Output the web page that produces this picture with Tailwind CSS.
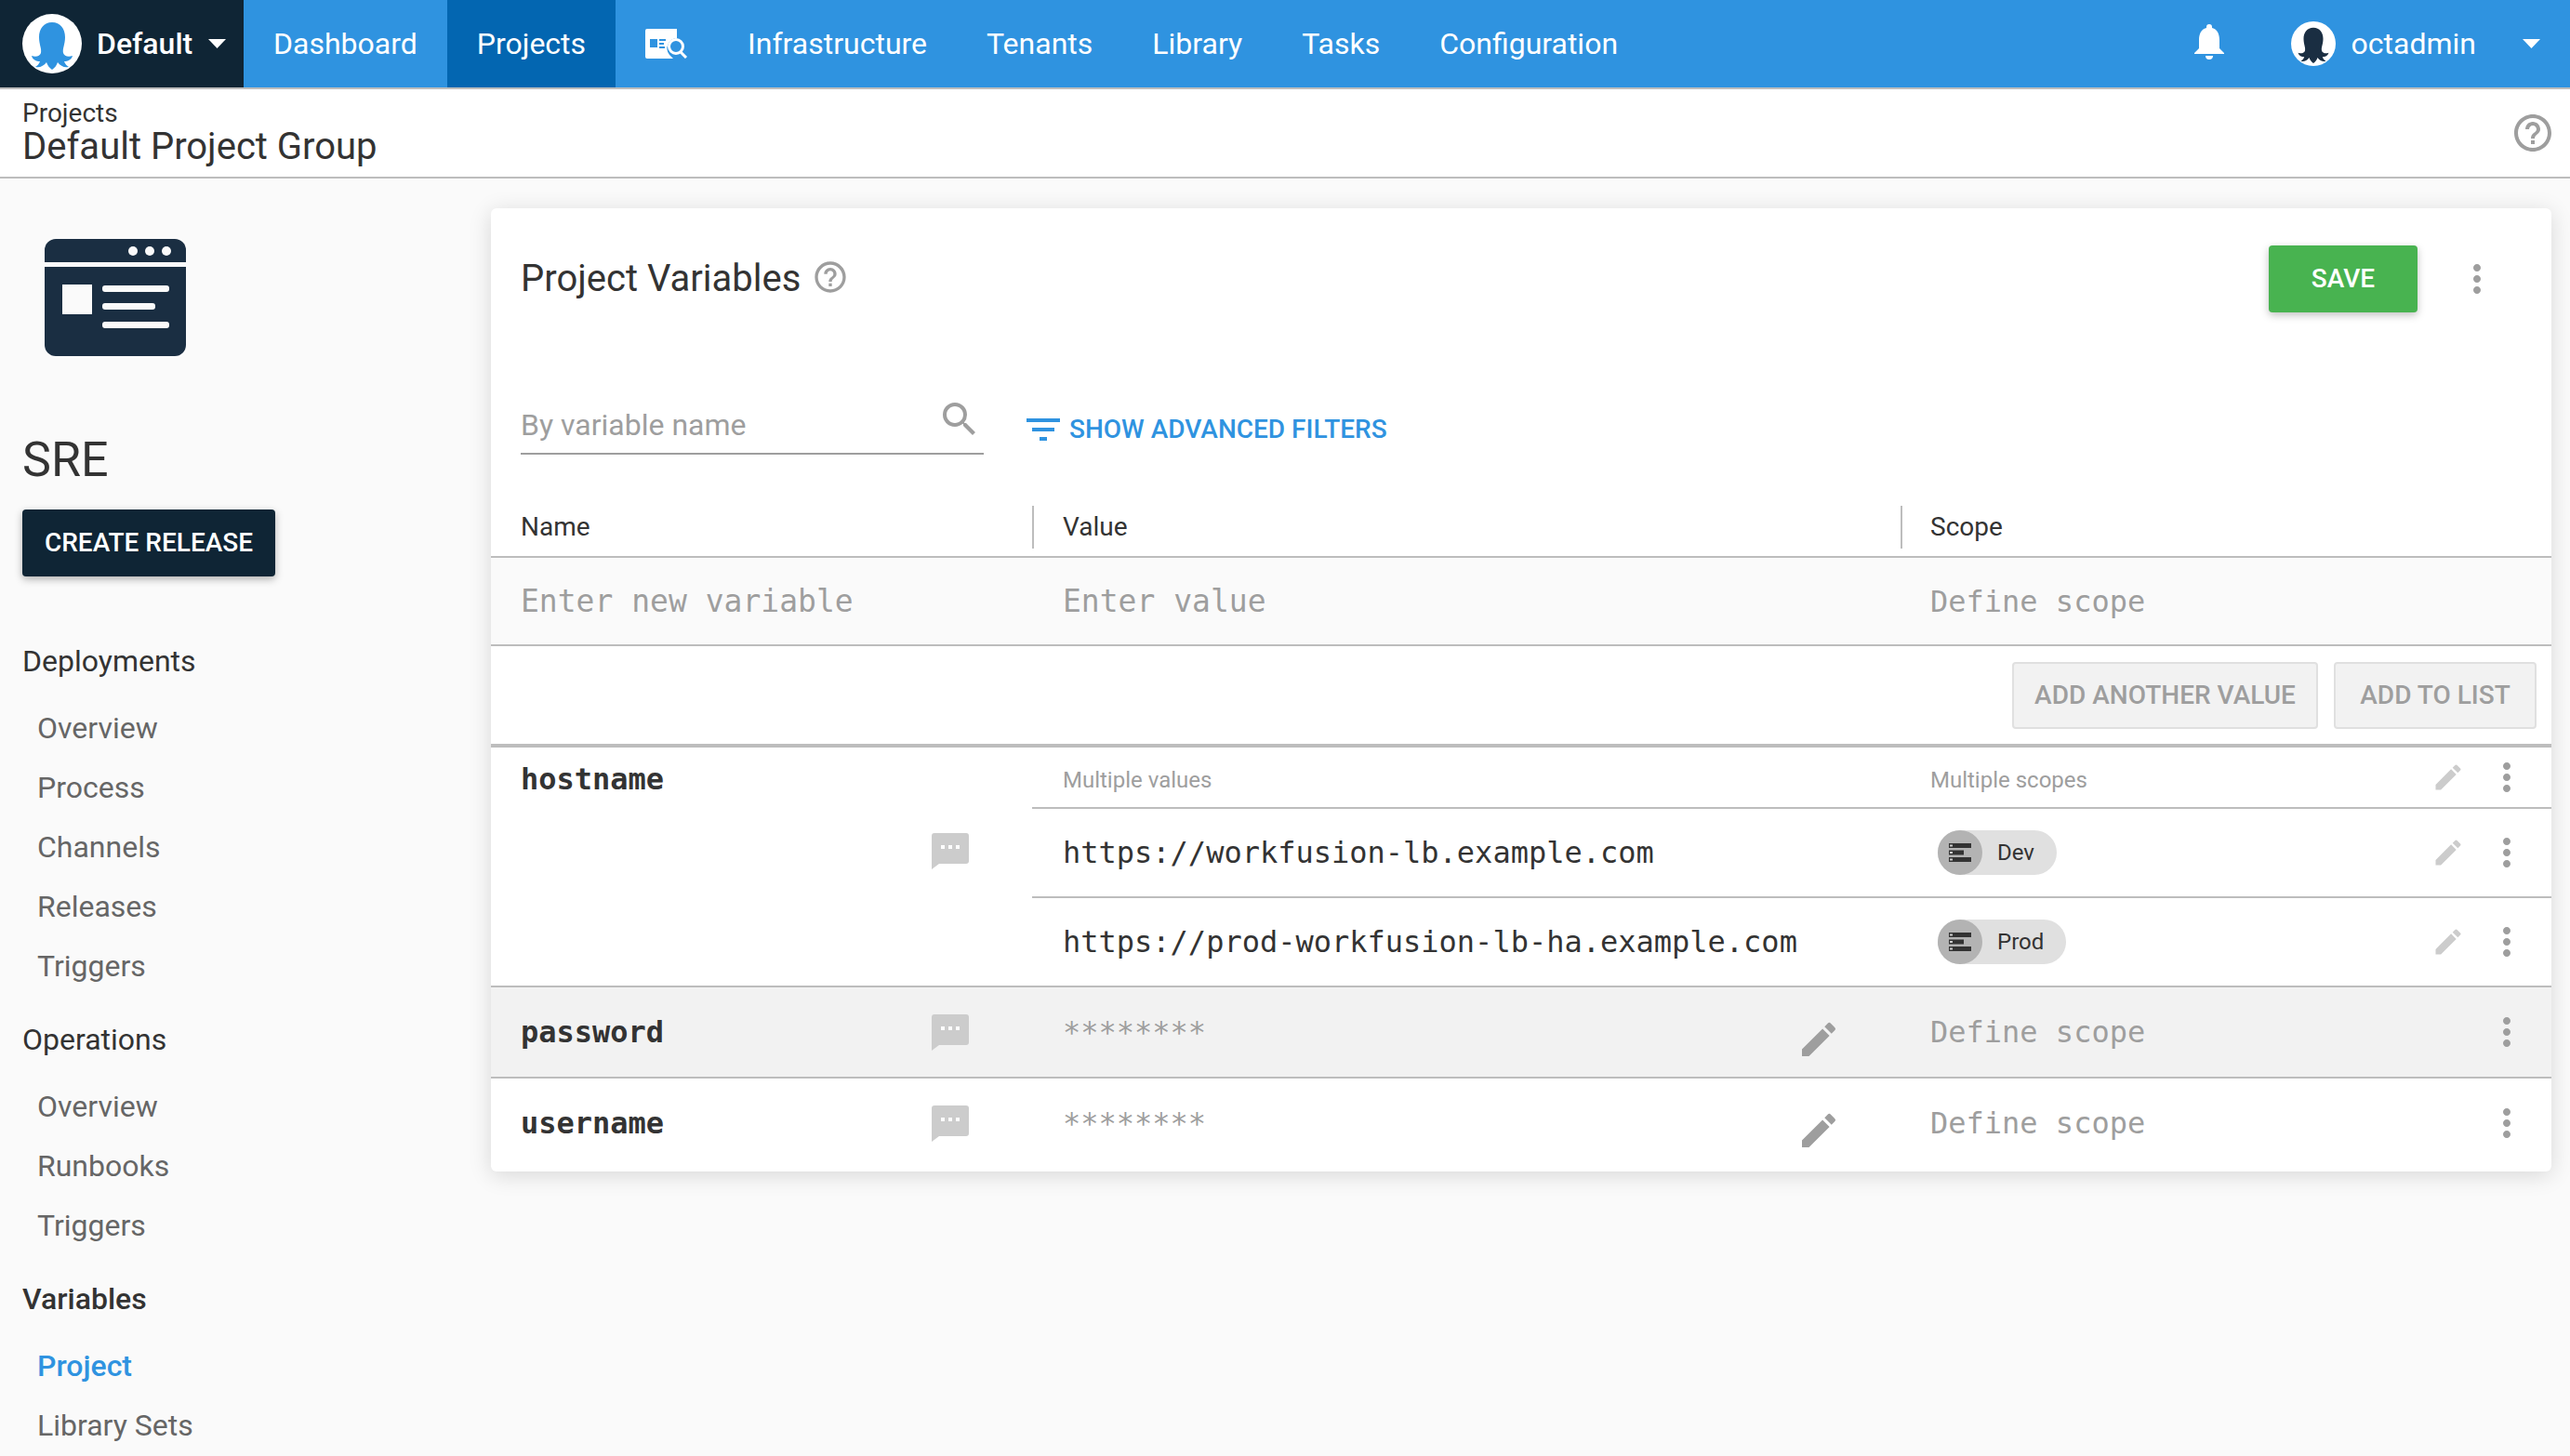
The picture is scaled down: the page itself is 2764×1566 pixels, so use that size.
<!DOCTYPE html>
<html lang="en">
<head>
  <meta charset="UTF-8" />
  <title>Project Variables</title>
  <script src="https://cdn.jsdelivr.net/npm/@tailwindcss/browser@4"></script>
</head>
<body class="bg-[#fafafa] font-['Roboto',sans-serif] text-[#333] h-[1566px] overflow-hidden">

  <!-- top nav -->
  <nav class="flex h-[96px] bg-[#2f93e0] border-b-2 border-[#bdbdbd] text-white text-[32px]">
    <div class="flex items-center w-[262px] bg-[#0f2535] pl-[24px]">
      <svg class="w-[64px] h-[64px]" viewBox="0 0 64 64"><circle cx="32" cy="32" r="32" fill="#fff"/><path fill="#2f93e0" d="M32 9C23 9 18 16 18 25C18 33 21 37 20 42C19 45 15 47 10 45C11 49 15 51 19 51C18 54 16 56 14 57C19 58 23 56 26 52C27 55 29 58 32 60C35 58 37 55 38 52C41 56 45 58 50 57C48 56 46 54 45 51C49 51 53 49 54 45C49 47 45 45 44 42C43 37 46 33 46 25C46 16 41 9 32 9Z"/></svg>
      <span class="ml-[16px] font-medium">Default</span>
      <svg class="ml-[17px] w-[19px] h-[10px]" viewBox="0 0 19 10"><path fill="#fff" d="M0 0h19L9.500 10z"/></svg>
    </div>
    <a class="flex items-center px-[32px]">Dashboard</a>
    <a class="flex items-center px-[32px] bg-[#0366b1]">Projects</a>
    <a class="flex items-center px-[32px]">
      <svg class="w-[46px] h-[32px]" viewBox="0 0 46 32"><path fill="#fff" d="M2 0h32v10a11 11 0 0 0-8 18l4 4H2a2 2 0 0 1-2-2V2a2 2 0 0 1 2-2z"/><rect x="5" y="11" width="8" height="9" fill="#2f93e0"/><rect x="15" y="11" width="7" height="2" fill="#2f93e0"/><rect x="15" y="15" width="5" height="2" fill="#2f93e0"/><rect x="15" y="19" width="6" height="2" fill="#2f93e0"/><circle cx="33" cy="19" r="7.500" fill="none" stroke="#fff" stroke-width="3"/><path d="M38 25l6 6" stroke="#fff" stroke-width="3"/></svg>
    </a>
    <a class="flex items-center px-[32px]">Infrastructure</a>
    <a class="flex items-center px-[32px]">Tenants</a>
    <a class="flex items-center px-[32px]">Library</a>
    <a class="flex items-center px-[32px]">Tasks</a>
    <a class="flex items-center px-[32px]">Configuration</a>
    <div class="ml-auto flex items-center pr-[32px]">
      <svg class="w-[32px] h-[39px] mb-[4px]" viewBox="0 0 32 39"><path fill="#fff" d="M16 0a3 3 0 0 1 3 3v1c6 1.500 8 7 8 13v9l5 5v1H0v-1l5-5v-9C5 11 7 5.500 13 4V3a3 3 0 0 1 3-3zM12 34h8a4 4 0 0 1-8 0z"/></svg>
      <svg class="ml-[72px] w-[48px] h-[48px]" viewBox="0 0 64 64"><circle cx="32" cy="32" r="32" fill="#fff"/><path fill="#1a2e42" d="M32 9C23 9 18 16 18 25C18 33 21 37 20 42C19 45 15 47 10 45C11 49 15 51 19 51C18 54 16 56 14 57C19 58 23 56 26 52C27 55 29 58 32 60C35 58 37 55 38 52C41 56 45 58 50 57C48 56 46 54 45 51C49 51 53 49 54 45C49 47 45 45 44 42C43 37 46 33 46 25C46 16 41 9 32 9Z"/></svg>
      <span class="ml-[17px]">octadmin</span>
      <svg class="ml-[50px] w-[19px] h-[10px]" viewBox="0 0 19 10"><path fill="#fff" d="M0 0h19L9.500 10z"/></svg>
    </div>
  </nav>

  <!-- breadcrumb header -->
  <header class="flex items-center justify-between h-[96px] bg-white border-b-2 border-[#bdbdbd] pl-[24px] pr-[16px]">
    <div class="-mt-[2px]">
      <div class="text-[28px] leading-[32px]">Projects</div>
      <div class="text-[40px] leading-[40px]">Default Project Group</div>
    </div>
    <svg class="w-[48px] h-[48px]" viewBox="0 0 24 24"><path fill="#9e9e9e" d="M11 18h2v-2h-2v2zm1-16C6.480 2 2 6.480 2 12s4.480 10 10 10 10-4.480 10-10S17.520 2 12 2zm0 18c-4.410 0-8-3.590-8-8s3.590-8 8-8 8 3.590 8 8-3.590 8-8 8zm0-14c-2.210 0-4 1.790-4 4h2c0-1.100.9-2 2-2s2 .9 2 2c0 2-3 1.750-3 5h2c0-2.250 3-2.500 3-5 0-2.210-1.790-4-4-4z"/></svg>
  </header>

  <div class="flex">
    <!-- sidebar -->
    <aside class="w-[528px] shrink-0 pl-[24px] pt-[65px]">
      <svg class="ml-[24px] w-[152px] h-[126px]" viewBox="0 0 152 126">
        <rect width="152" height="126" rx="12" fill="#1a2e42"/>
        <rect y="25" width="152" height="5" fill="#fafafa"/>
        <circle cx="95" cy="13" r="5" fill="#fafafa"/><circle cx="113" cy="13" r="5" fill="#fafafa"/><circle cx="131" cy="13" r="5" fill="#fafafa"/>
        <rect x="19" y="49" width="32" height="32" fill="#fafafa"/>
        <rect x="62" y="50" width="72" height="7" rx="3" fill="#fafafa"/>
        <rect x="62" y="69" width="57" height="7" rx="3" fill="#fafafa"/>
        <rect x="62" y="89" width="72" height="7" rx="3" fill="#fafafa"/>
      </svg>
      <div class="mt-[82px] text-[52px] leading-[60px]">SRE</div>
      <button class="mt-[23px] block w-[272px] h-[72px] bg-[#0f2535] text-white text-[28px] font-medium rounded-[4px] shadow-[0_3px_8px_rgba(0,0,0,0.3)]">CREATE RELEASE</button>
      <div class="mt-[71px] text-[32px] leading-[40px]">Deployments</div>
      <ul class="mt-[32px] flex flex-col gap-[24px] pl-[16px] text-[32px] leading-[40px] text-[#666]">
        <li>Overview</li>
        <li>Process</li>
        <li>Channels</li>
        <li>Releases</li>
        <li>Triggers</li>
      </ul>
      <div class="mt-[39px] text-[32px] leading-[40px]">Operations</div>
      <ul class="mt-[32px] flex flex-col gap-[24px] pl-[16px] text-[32px] leading-[40px] text-[#666]">
        <li>Overview</li>
        <li>Runbooks</li>
        <li>Triggers</li>
      </ul>
      <div class="mt-[39px] text-[32px] leading-[40px] font-medium">Variables</div>
      <ul class="mt-[32px] flex flex-col gap-[24px] pl-[16px] text-[32px] leading-[40px] text-[#666]">
        <li class="text-[#2f93e0] font-medium">Project</li>
        <li>Library Sets</li>
      </ul>
    </aside>

    <!-- card -->
    <main class="mt-[32px] w-[2216px] h-[1036px] bg-white rounded-[6px] shadow-[0_4px_24px_rgba(0,0,0,0.14)] overflow-hidden">
      <div class="flex items-center h-[72px] mt-[40px] pl-[32px] pr-[56px]">
        <h1 class="text-[40px]">Project Variables</h1>
        <svg class="ml-[12px] mb-[4px] w-[40px] h-[40px]" viewBox="0 0 24 24"><path fill="#9e9e9e" d="M11 18h2v-2h-2v2zm1-16C6.480 2 2 6.480 2 12s4.480 10 10 10 10-4.480 10-10S17.520 2 12 2zm0 18c-4.410 0-8-3.590-8-8s3.590-8 8-8 8 3.590 8 8-3.590 8-8 8zm0-14c-2.210 0-4 1.790-4 4h2c0-1.100.9-2 2-2s2 .9 2 2c0 2-3 1.750-3 5h2c0-2.250 3-2.500 3-5 0-2.210-1.790-4-4-4z"/></svg>
        <button class="ml-auto w-[160px] h-[72px] bg-[#48b350] text-white text-[28px] font-medium rounded-[4px] shadow-[0_3px_8px_rgba(0,0,0,0.25)]">SAVE</button>
        <svg class="ml-[40px] w-[48px] h-[48px]" viewBox="0 0 24 24"><path fill="#9e9e9e" d="M12 8c1.100 0 2-.9 2-2s-.9-2-2-2-2 .9-2 2 .9 2 2 2zm0 2c-1.100 0-2 .9-2 2s.9 2 2 2 2-.9 2-2-.9-2-2-2zm0 6c-1.100 0-2 .9-2 2s.9 2 2 2 2-.9 2-2-.9-2-2-2z"/></svg>
      </div>

      <!-- filter -->
      <div class="flex items-start mt-[91px] pl-[32px]">
        <div class="flex items-center justify-between w-[498px] h-[62px] border-b-2 border-[#9e9e9e] pr-[2px]">
          <span class="text-[32px] text-[#9e9e9e]">By variable name</span>
          <svg class="w-[48px] h-[48px] -mt-[12px]" viewBox="0 0 24 24"><path fill="#9e9e9e" d="M15.500 14h-.79l-.28-.27A6.471 6.471 0 0 0 16 9.500 6.500 6.500 0 1 0 9.500 16c1.610 0 3.090-.59 4.230-1.570l.27.28v.79l5 4.990L20.490 19l-4.990-5zm-6 0C7.010 14 5 11.990 5 9.500S7.010 5 9.500 5 14 7.010 14 9.500 11.990 14 9.500 14z"/></svg>
        </div>
        <a class="flex items-center ml-[40px] mt-[11px] h-[48px] text-[#2f93e0] text-[28px] font-medium">
          <svg class="w-[48px] h-[48px]" viewBox="0 0 24 24"><path fill="#2f93e0" d="M10 18h4v-2h-4v2zM3 6v2h18V6H3zm3 7h12v-2H6v2z"/></svg>
          <span class="ml-[4px]">SHOW ADVANCED FILTERS</span>
        </a>
      </div>

      <!-- table header -->
      <div class="flex h-[56px] mt-[55px] border-b-2 border-[#bdbdbd] text-[28px]">
        <div class="w-[582px] h-[46px] flex items-center pl-[32px]">Name</div>
        <div class="w-[934px] h-[46px] flex items-center pl-[31px] border-l-2 border-[#bdbdbd]">Value</div>
        <div class="flex-1 h-[46px] flex items-center pl-[30px] border-l-2 border-[#bdbdbd]">Scope</div>
      </div>

      <!-- new variable row -->
      <div class="flex items-center h-[95px] bg-[#fafafa] border-b-2 border-[#bdbdbd] font-['DejaVu_Sans_Mono',monospace] text-[33px] text-[#9e9e9e]">
        <div class="w-[582px] pl-[32px]">Enter new variable</div>
        <div class="w-[934px] pl-[33px]">Enter value</div>
        <div class="pl-[32px] text-[32px]">Define scope</div>
      </div>

      <div class="flex justify-end gap-[17px] h-[109px] pt-[17px] pr-[16px] border-b-4 border-[#bdbdbd] text-[28px] font-medium text-[#9e9e9e]">
        <button class="w-[329px] h-[72px] bg-[#f2f2f2] border-2 border-[#e0e0e0] rounded-[4px]">ADD ANOTHER VALUE</button>
        <button class="w-[218px] h-[72px] bg-[#f2f2f2] border-2 border-[#e0e0e0] rounded-[4px]">ADD TO LIST</button>
      </div>

      <!-- hostname -->
      <div class="flex h-[258px] border-b-2 border-[#bdbdbd]">
        <div class="w-[582px] shrink-0 pl-[32px] pr-[68px]">
          <div class="mt-[14px] h-[40px] leading-[40px] font-['DejaVu_Sans_Mono',monospace] font-bold text-[32px]">hostname</div>
          <svg class="ml-auto mt-[38px] w-[40px] h-[39px]" viewBox="0 0 40 39"><path fill="#ccc" d="M3 0h34a3 3 0 0 1 3 3v27a3 3 0 0 1-3 3H8l-8 6V3a3 3 0 0 1 3-3z"/><path fill="#fff" d="M10 13h4v4h-4zM18 13h4v4h-4zM26 13h4v4h-4z"/></svg>
        </div>
        <div class="flex-1">
          <div class="flex items-center h-[66px] border-b-2 border-[#bdbdbd] text-[24px] text-[#9e9e9e]">
            <div class="w-[934px] pl-[33px] pt-[6px]">Multiple values</div>
            <div class="pl-[32px] pt-[6px]">Multiple scopes</div>
            <svg class="ml-auto w-[36px] h-[36px]" viewBox="0 0 24 24"><path fill="#ccc" d="M3 17.250V21h3.750L17.810 9.940l-3.750-3.750L3 17.250zM20.710 7.040a.996.996 0 0 0 0-1.410l-2.340-2.340a.996.996 0 0 0-1.410 0l-1.830 1.830 3.750 3.750 1.830-1.830z"/></svg>
            <svg class="ml-[21px] mr-[24px] w-[48px] h-[48px]" viewBox="0 0 24 24"><path fill="#9e9e9e" d="M12 8c1.100 0 2-.9 2-2s-.9-2-2-2-2 .9-2 2 .9 2 2 2zm0 2c-1.100 0-2 .9-2 2s.9 2 2 2 2-.9 2-2-.9-2-2-2zm0 6c-1.100 0-2 .9-2 2s.9 2 2 2 2-.9 2-2-.9-2-2-2z"/></svg>
          </div>
          <div class="flex items-center h-[96px] border-b-2 border-[#bdbdbd]">
            <div class="w-[934px] pl-[33px] font-['DejaVu_Sans_Mono',monospace] text-[32px]">https://workfusion-lb.example.com</div>
            <div class="ml-[40px] flex items-center h-[48px] pr-[24px] bg-[#e0e0e0] rounded-full text-[24px]">
              <span class="flex items-center justify-center w-[48px] h-[48px] bg-[#b3b3b3] rounded-full">
                <svg class="w-[24px] h-[20px]" viewBox="0 0 24 20"><path fill="#333" d="M0 0h24v5H0zM0 7.500h16v5H0zM0 15h24v5H0z"/><path fill="#ccc" d="M1 1.500h3v2H1zM1 9h3v2H1zM1 16.500h3v2H1z"/></svg>
              </span>
              <span class="ml-[16px]">Dev</span>
            </div>
            <svg class="ml-auto w-[36px] h-[36px]" viewBox="0 0 24 24"><path fill="#ccc" d="M3 17.250V21h3.750L17.810 9.940l-3.750-3.750L3 17.250zM20.710 7.040a.996.996 0 0 0 0-1.410l-2.340-2.340a.996.996 0 0 0-1.410 0l-1.830 1.830 3.750 3.750 1.830-1.830z"/></svg>
            <svg class="ml-[21px] mr-[24px] w-[48px] h-[48px]" viewBox="0 0 24 24"><path fill="#9e9e9e" d="M12 8c1.100 0 2-.9 2-2s-.9-2-2-2-2 .9-2 2 .9 2 2 2zm0 2c-1.100 0-2 .9-2 2s.9 2 2 2 2-.9 2-2-.9-2-2-2zm0 6c-1.100 0-2 .9-2 2s.9 2 2 2 2-.9 2-2-.9-2-2-2z"/></svg>
          </div>
          <div class="flex items-center h-[94px]">
            <div class="w-[934px] pl-[33px] font-['DejaVu_Sans_Mono',monospace] text-[32px]">https://prod-workfusion-lb-ha.example.com</div>
            <div class="ml-[40px] flex items-center h-[48px] pr-[24px] bg-[#e0e0e0] rounded-full text-[24px]">
              <span class="flex items-center justify-center w-[48px] h-[48px] bg-[#b3b3b3] rounded-full">
                <svg class="w-[24px] h-[20px]" viewBox="0 0 24 20"><path fill="#333" d="M0 0h24v5H0zM0 7.500h16v5H0zM0 15h24v5H0z"/><path fill="#ccc" d="M1 1.500h3v2H1zM1 9h3v2H1zM1 16.500h3v2H1z"/></svg>
              </span>
              <span class="ml-[16px]">Prod</span>
            </div>
            <svg class="ml-auto w-[36px] h-[36px]" viewBox="0 0 24 24"><path fill="#ccc" d="M3 17.250V21h3.750L17.810 9.940l-3.750-3.750L3 17.250zM20.710 7.040a.996.996 0 0 0 0-1.410l-2.340-2.340a.996.996 0 0 0-1.410 0l-1.830 1.830 3.750 3.750 1.830-1.830z"/></svg>
            <svg class="ml-[21px] mr-[24px] w-[48px] h-[48px]" viewBox="0 0 24 24"><path fill="#9e9e9e" d="M12 8c1.100 0 2-.9 2-2s-.9-2-2-2-2 .9-2 2 .9 2 2 2zm0 2c-1.100 0-2 .9-2 2s.9 2 2 2 2-.9 2-2-.9-2-2-2zm0 6c-1.100 0-2 .9-2 2s.9 2 2 2 2-.9 2-2-.9-2-2-2z"/></svg>
          </div>
        </div>
      </div>

      <!-- password -->
      <div class="flex items-center h-[98px] bg-[#f2f2f2] border-b-2 border-[#bdbdbd]">
        <div class="flex items-center justify-between w-[582px] pl-[32px] pr-[68px]">
          <span class="font-['DejaVu_Sans_Mono',monospace] font-bold text-[32px]">password</span>
          <svg class="w-[40px] h-[39px]" viewBox="0 0 40 39"><path fill="#ccc" d="M3 0h34a3 3 0 0 1 3 3v27a3 3 0 0 1-3 3H8l-8 6V3a3 3 0 0 1 3-3z"/><path fill="#fff" d="M10 13h4v4h-4zM18 13h4v4h-4zM26 13h4v4h-4z"/></svg>
        </div>
        <div class="flex items-center justify-between w-[934px] pl-[33px] pr-[64px] font-['DejaVu_Sans_Mono',monospace] text-[32px] text-[#9e9e9e]">
          <span>********</span>
          <svg class="mt-[16px] w-[48px] h-[48px]" viewBox="0 0 24 24"><path fill="#9e9e9e" d="M3 17.250V21h3.750L17.810 9.940l-3.750-3.750L3 17.250zM20.710 7.040a.996.996 0 0 0 0-1.410l-2.340-2.340a.996.996 0 0 0-1.410 0l-1.830 1.830 3.750 3.750 1.830-1.830z"/></svg>
        </div>
        <div class="pl-[32px] font-['DejaVu_Sans_Mono',monospace] text-[32px] text-[#9e9e9e]">Define scope</div>
        <svg class="ml-auto mr-[24px] w-[48px] h-[48px]" viewBox="0 0 24 24"><path fill="#9e9e9e" d="M12 8c1.100 0 2-.9 2-2s-.9-2-2-2-2 .9-2 2 .9 2 2 2zm0 2c-1.100 0-2 .9-2 2s.9 2 2 2 2-.9 2-2-.9-2-2-2zm0 6c-1.100 0-2 .9-2 2s.9 2 2 2 2-.9 2-2-.9-2-2-2z"/></svg>
      </div>

      <!-- username -->
      <div class="flex items-center h-[96px]">
        <div class="flex items-center justify-between w-[582px] pl-[32px] pr-[68px]">
          <span class="font-['DejaVu_Sans_Mono',monospace] font-bold text-[32px]">username</span>
          <svg class="w-[40px] h-[39px]" viewBox="0 0 40 39"><path fill="#ccc" d="M3 0h34a3 3 0 0 1 3 3v27a3 3 0 0 1-3 3H8l-8 6V3a3 3 0 0 1 3-3z"/><path fill="#fff" d="M10 13h4v4h-4zM18 13h4v4h-4zM26 13h4v4h-4z"/></svg>
        </div>
        <div class="flex items-center justify-between w-[934px] pl-[33px] pr-[64px] font-['DejaVu_Sans_Mono',monospace] text-[32px] text-[#9e9e9e]">
          <span>********</span>
          <svg class="mt-[16px] w-[48px] h-[48px]" viewBox="0 0 24 24"><path fill="#9e9e9e" d="M3 17.250V21h3.750L17.810 9.940l-3.750-3.750L3 17.250zM20.710 7.040a.996.996 0 0 0 0-1.410l-2.340-2.340a.996.996 0 0 0-1.410 0l-1.830 1.830 3.750 3.750 1.830-1.830z"/></svg>
        </div>
        <div class="pl-[32px] font-['DejaVu_Sans_Mono',monospace] text-[32px] text-[#9e9e9e]">Define scope</div>
        <svg class="ml-auto mr-[24px] w-[48px] h-[48px]" viewBox="0 0 24 24"><path fill="#9e9e9e" d="M12 8c1.100 0 2-.9 2-2s-.9-2-2-2-2 .9-2 2 .9 2 2 2zm0 2c-1.100 0-2 .9-2 2s.9 2 2 2 2-.9 2-2-.9-2-2-2zm0 6c-1.100 0-2 .9-2 2s.9 2 2 2 2-.9 2-2-.9-2-2-2z"/></svg>
      </div>
    </main>
  </div>
</body>
</html>
